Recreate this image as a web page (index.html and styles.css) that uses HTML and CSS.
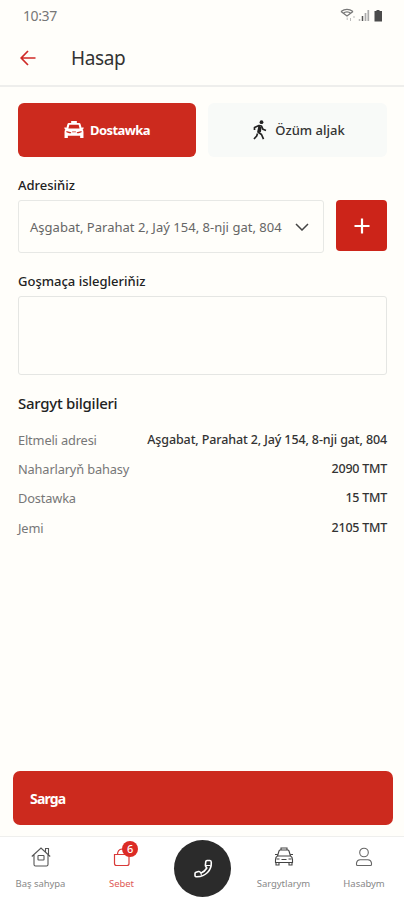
FILE: index.html
```html
<!DOCTYPE html>
<html lang="tk">
<head>
<meta charset="utf-8">
<title>Hasap</title>
<link rel="stylesheet" href="styles.css">
</head>
<body>
<div class="screen">
  <div class="status">
    <span class="time">10:37</span>
    <svg class="status-icons" width="44" height="16" viewBox="0 0 44 16" fill="none">
      <path d="M1 3.500Q7 -.8 13 3.500M3 5.300Q7 2.500 11 5.300M1 3.500L7 8L13 3.500" stroke="#777" stroke-width="1.300"/>
      <path d="M7.200 9.500v2.500M10.500 10v3M14 8v2" stroke="#bbb"/>
      <path d="M19.500 11v2" stroke="#bbb" stroke-width="1.500"/><path d="M22.500 8v5" stroke="#555" stroke-width="1.500"/><path d="M25.500 5v8M28.300 2v11" stroke="#aaa" stroke-width="1.700"/>
      <path d="M34.500 3h2V2h3v1h2.500v10.500h-7.500z" fill="#4b4b4b"/>
    </svg>
  </div>
  <header class="topbar">
    <svg width="16" height="16" viewBox="0 0 16 16" fill="none" stroke="#cf2a27" stroke-width="1.700"><path d="M15.500 8H1.500M8 1L1.200 8L8 15"/></svg>
    <h1>Hasap</h1>
  </header>
  <main>
    <div class="tabs">
      <button class="tab active">
        <svg width="20" height="18" viewBox="0 0 21 19"><path fill="#fff" fill-rule="evenodd" d="M7.500 0h6v2H16q1 0 1.300 1L18.500 7.200L20.500 6.500V8.500L19.600 9Q20.500 10 20.500 11.500V18h-3.500v-2.500H4V18H.5V11.500Q.5 10 1.400 9L.5 8.500V6.500L2.500 7.200L3.700 3Q4 2 5 2h2.500zM5.600 4L4.600 8h11.800L15.400 4zM2.500 10.500v1.500l3 .8h2v-1zM18.500 10.500v1.500l-3 .8h-2v-1zM8.500 11v1h4v-1z"/></svg>
        <span>Dostawka</span>
      </button>
      <button class="tab">
        <svg width="14" height="20" viewBox="0 0 14 20" fill="none" stroke="#222" stroke-width="1.700" stroke-linejoin="round"><circle cx="8.500" cy="2.200" r="1.900" fill="#222" stroke="none"/><path d="M1.500 10V7.500L6 5.500L8.500 6L10 9.300L13 10.500M6.300 6L5 12L8.500 14.500L10.500 19.200M4.500 13.500L3.700 16L1 19"/><path d="M7.300 6.500L6.500 12" stroke-width="2.800"/></svg>
        <span>Özüm aljak</span>
      </button>
    </div>
    <label class="label"><span>Adresiňiz</span></label>
    <div class="address">
      <div class="select"><span>Aşgabat, Parahat 2, Jaý 154, 8-nji gat, 804</span>
        <svg width="14" height="8" viewBox="0 0 14 8" fill="none" stroke="#444" stroke-width="1.500"><path d="M1 1L7 7L13 1"/></svg></div>
      <button class="add"><svg width="16" height="16" viewBox="0 0 16 16" stroke="#fff" stroke-width="2.200"><path d="M8 .5V15.500M.5 8H15.500"/></svg></button>
    </div>
    <label class="label"><span>Goşmaça islegleriňiz</span></label>
    <div class="notes"></div>
    <h2>Sargyt bilgileri</h2>
    <dl>
      <div><dt>Eltmeli adresi</dt><dd class="long">Aşgabat, Parahat 2, Jaý 154, 8-nji gat, 804</dd></div>
      <div><dt>Naharlaryň bahasy</dt><dd>2090 TMT</dd></div>
      <div><dt>Dostawka</dt><dd>15 TMT</dd></div>
      <div><dt>Jemi</dt><dd>2105 TMT</dd></div>
    </dl>
  </main>
  <button class="order">Sarga</button>
  <nav>
    <a><svg width="20" height="20" viewBox="0 0 20 20" fill="none" stroke="#555" stroke-width="1.100"><path d="M.8 9.500L10 1L19.200 9.500M3 8V17.500Q3 19 4.500 19H15.500Q17 19 17 17.500V8M14.500 4.800V1.500H17.500V7.500"/><rect x="7" y="8.500" width="6" height="4.500" rx=".6"/></svg><span>Baş sahypa</span></a>
    <a class="current"><svg width="20" height="20" viewBox="0 0 20 20" fill="none" stroke="#d93a38" stroke-width="1.200"><path d="M2.500 7.500H17V16.500Q17 18.500 15 18.500H4.500Q2.500 18.500 2.500 16.500ZM5.500 7.500Q5.500 2.500 10 2Q14 2.500 14 7.500"/></svg><b class="badge">6</b><span>Sebet</span></a>
    <div class="call"><svg width="20" height="20" viewBox="0 0 20 20" fill="none" stroke="#fff" stroke-width="1.600" stroke-linejoin="round"><path d="M12.800 2.500Q13 1.500 14 1.500H17Q18.200 1.500 18.300 3.500Q18.500 9.500 14.500 13.500Q10.500 17.500 4 17.800Q2 17.800 2 16.500V14.500Q2 13.500 3 13.200L5.500 12.500Q6.500 12.300 7 13L8.200 14Q11.500 12.800 13.800 9L12.800 7.500Q12.300 7 12.400 6Z"/><path d="M12.500 6.500H17.500M7.500 13L8.500 16.500" stroke-width="1"/></svg></div>
    <a><svg width="20" height="20" viewBox="0 0 20 20" fill="none" stroke="#444" stroke-width="1.100"><path d="M7 3V1H13V3M3.500 9L5 4Q5.300 3 6.300 3H13.700Q14.700 3 15 4L16.500 9M3.500 9H16.500Q18.500 10 18.500 12.500V15.500H1.500V12.500Q1.500 10 3.500 9ZM3.300 7.500H1M16.700 7.500H19M2 15.500V18H5V15.500M15 15.500V18H18V15.500M2.500 12H5.500M14.500 12H17.500M7.500 12.500H12.500"/></svg><span>Sargytlarym</span></a>
    <a><svg width="20" height="20" viewBox="0 0 20 20" fill="none" stroke="#666" stroke-width="1.100"><circle cx="10" cy="5.500" r="4.300"/><path d="M2.500 17.500V16Q3 13 6 12.700H14Q17 13 17.500 16V17.500Q17.500 18.500 16.500 18.500H3.500Q2.500 18.500 2.500 17.500Z"/></svg><span>Hasabym</span></a>
  </nav>
</div>
</body>
</html>
```
FILE: styles.css
```css
* { box-sizing: border-box; margin: 0; padding: 0; }
body { font-family: "Noto Sans", sans-serif; background: #fffefa; color: #222; }
button { border: 0; font: inherit; color: inherit; }
svg { display: block; flex: none; }
span, dt, dd { white-space: nowrap; }
.screen { width: 404px; height: 900px; display: flex; flex-direction: column; overflow: hidden; }
.status { height: 31px; padding: 0 20px 0 23px; display: flex; justify-content: space-between; align-items: center; font-size: 14px; letter-spacing: -0.4px; color: #777; }
.status-icons { margin-top: 1px; }
.topbar { height: 56px; padding-left: 20px; display: flex; align-items: center; gap: 35px; border-bottom: 2px solid #eeeeec; }
h1 { font-size: 19px; font-weight: 400; letter-spacing: -0.4px; color: #333; }
main { padding: 16px 17px 0 18px; flex: 1; display: flex; flex-direction: column; }
.tabs { display: grid; grid-template-columns: 178px 1fr; gap: 12px; height: 54px; }
.tab { border-radius: 6px; background: #f8faf8; display: flex; align-items: center; justify-content: center; gap: 8px; padding-left: 3px; font-size: 13px; font-weight: 500; color: #333; }
.tab.active { background: #cc2a1e; color: #fff; font-weight: 700; gap: 6px; padding-left: 0; letter-spacing: -0.6px; }
.label { height: 43px; padding-top: 13px; display: flex; align-items: center; font-size: 13px; font-weight: 500; }
.address { display: flex; gap: 12px; height: 53px; }
.select { flex: 1; border: 1px solid #e7e8e5; border-radius: 3px; padding: 0 14px 0 11px; display: flex; align-items: center; justify-content: space-between; font-size: 13px; letter-spacing: 0.02px; color: #666; }
.add { width: 51px; height: 51px; border-radius: 4px; background: #cc2419; display: flex; align-items: center; justify-content: center; }
.notes { height: 79px; border: 1px solid #e5e6e3; border-radius: 3px; }
h2 { height: 56px; display: flex; align-items: center; font-size: 15px; font-weight: 500; letter-spacing: -0.27px; }
dl { margin-top: -6px; }
dl div { display: flex; justify-content: space-between; align-items: center; height: 29.3px; font-size: 12.8px; }
dt { color: #777; letter-spacing: -0.15px; }
dt, dd { line-height: 18px; }
dd { font-weight: 500; color: #333; font-size: 12.5px; letter-spacing: -0.25px; }
.long { letter-spacing: -0.12px; }
.order { margin: 0 11px 11px 13px; height: 54px; border-radius: 7px; background: #cc2a1e; color: #fff; font-weight: 700; font-size: 14px; letter-spacing: -0.8px; text-align: left; padding-left: 17px; }
nav { height: 64px; border-top: 1px solid #efefed; background: #fff; display: grid; grid-template-columns: 81px 81px 81px 81px 80px; }
nav a { position: relative; display: flex; flex-direction: column; align-items: center; padding-top: 10px; gap: 10px; font-size: 9.5px; line-height: 14px; letter-spacing: -0.05px; color: #888; }
nav .current { color: #e05a58; }
.badge { position: absolute; left: 41px; top: 4px; width: 16px; height: 16px; border-radius: 50%; background: #dc2b25; color: #fff; font-size: 11px; line-height: 16px; text-align: center; font-weight: 500; }
.call { width: 57px; height: 57px; margin: 3px auto 0; border-radius: 50%; background: #2b2b2b; display: flex; align-items: center; justify-content: center; }
```
